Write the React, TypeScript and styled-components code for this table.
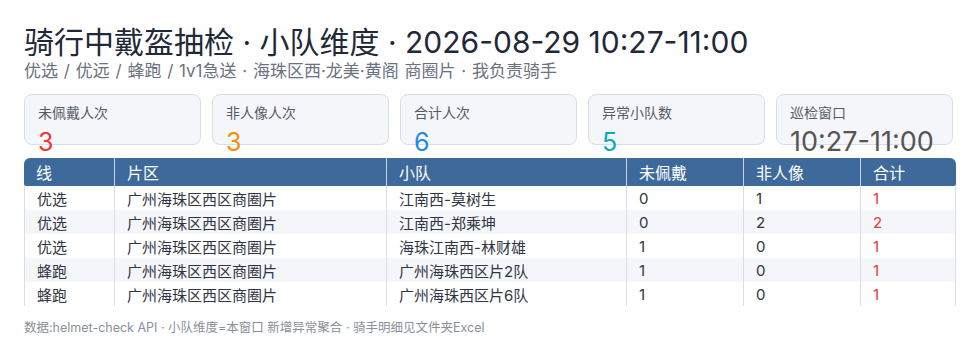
import React from 'react';
import styled, { createGlobalStyle } from 'styled-components';

const GlobalStyle = createGlobalStyle`
  body {
    margin: 0;
    background: #ffffff;
    font-family: Inter, 'Noto Sans CJK SC', sans-serif;
  }
`;

const Page = styled.div`
  width: 980px;
  height: 362px;
  box-sizing: border-box;
  padding: 24px 24px 0 24px;
  overflow: hidden;
`;

const Title = styled.h1`
  margin: 0;
  font-size: 30px;
  line-height: 36px;
  font-weight: 400;
  color: #1f2937;
`;

const Subtitle = styled.div`
  font-size: 17px;
  line-height: 22px;
  word-spacing: 1px;
  color: #6b7280;
`;

const Cards = styled.div`
  display: grid;
  grid-template-columns: repeat(5, 177px);
  gap: 11px;
  margin-top: 12px;
`;

const Card = styled.div`
  height: 51px;
  box-sizing: border-box;
  border: 1px solid #d8dde6;
  border-radius: 8px;
  background: #f5f6fa;
  padding: 7px 13px 0;
`;

const CardLabel = styled.div`
  font-size: 14px;
  line-height: 22px;
  color: #555b66;
`;

const CardValue = styled.div<{ $color: string; $size: number }>`
  margin-top: 6px;
  font-size: ${(p) => p.$size}px;
  line-height: 24px;
  color: ${(p) => p.$color};
  white-space: nowrap;
`;

const Table = styled.table`
  margin-top: 13px;
  width: 932px;
  border-collapse: separate;
  border-spacing: 0;
  table-layout: fixed;
`;

const Th = styled.th`
  background: #3e6a9b;
  color: #ffffff;
  font-size: 16px;
  font-weight: 400;
  text-align: left;
  height: 28px;
  padding: 0 12px;
  border-left: 1px solid #c9d4e2;

  &:first-child {
    border-left: none;
    border-radius: 6px 0 0 2px;
  }
  &:last-child {
    border-radius: 0 6px 2px 0;
  }
`;

const Tr = styled.tr<{ $stripe: boolean }>`
  background: ${(p) => (p.$stripe ? '#f5f6fa' : '#ffffff')};
`;

const Td = styled.td<{ $alert?: boolean }>`
  font-size: 15px;
  height: 24px;
  padding: 0 12px;
  color: ${(p) => (p.$alert ? '#e53935' : '#2f3542')};
  border-left: 1px solid #d8dde6;
  white-space: nowrap;

  &:last-child {
    border-right: 1px solid #d8dde6;
  }
`;

const Footer = styled.div`
  margin-top: 13px;
  font-size: 12.5px;
  line-height: 18px;
  color: #8a909a;
`;

const cards = [
  { label: '未佩戴人次', value: '3', color: '#e53935', size: 25 },
  { label: '非人像人次', value: '3', color: '#fb8c00', size: 25 },
  { label: '合计人次', value: '6', color: '#1e88e5', size: 25 },
  { label: '异常小队数', value: '5', color: '#00acc1', size: 25 },
  { label: '巡检窗口', value: '10:27-11:00', color: '#555555', size: 27 },
];

const widths = [90, 272, 240, 117, 117, 96];
const heads = ['线', '片区', '小队', '未佩戴', '非人像', '合计'];

const rows = [
  ['优选', '广州海珠区西区商圈片', '江南西-莫树生', '0', '1', '1'],
  ['优选', '广州海珠区西区商圈片', '江南西-郑乘坤', '0', '2', '2'],
  ['优选', '广州海珠区西区商圈片', '海珠江南西-林财雄', '1', '0', '1'],
  ['蜂跑', '广州海珠区西区商圈片', '广州海珠西区片2队', '1', '0', '1'],
  ['蜂跑', '广州海珠区西区商圈片', '广州海珠西区片6队', '1', '0', '1'],
];

export default function App() {
  return (
    <Page>
      <GlobalStyle />
      <Title>骑行中戴盔抽检 · 小队维度 · 2026-08-29 10:27-11:00</Title>
      <Subtitle>优选 / 优远 / 蜂跑 / 1v1急送 · 海珠区西·龙美·黄阁 商圈片 · 我负责骑手</Subtitle>
      <Cards>
        {cards.map((c) => (
          <Card key={c.label}>
            <CardLabel>{c.label}</CardLabel>
            <CardValue $color={c.color} $size={c.size}>
              {c.value}
            </CardValue>
          </Card>
        ))}
      </Cards>
      <Table>
        <colgroup>
          {widths.map((w, i) => (
            <col key={i} style={{ width: w }} />
          ))}
        </colgroup>
        <thead>
          <tr>
            {heads.map((h) => (
              <Th key={h}>{h}</Th>
            ))}
          </tr>
        </thead>
        <tbody>
          {rows.map((r, i) => (
            <Tr key={i} $stripe={i % 2 === 1}>
              {r.map((cell, j) => (
                <Td key={j} $alert={j === 5}>
                  {cell}
                </Td>
              ))}
            </Tr>
          ))}
        </tbody>
      </Table>
      <Footer>数据:helmet-check API · 小队维度=本窗口 新增异常聚合 · 骑手明细见文件夹Excel</Footer>
    </Page>
  );
}
